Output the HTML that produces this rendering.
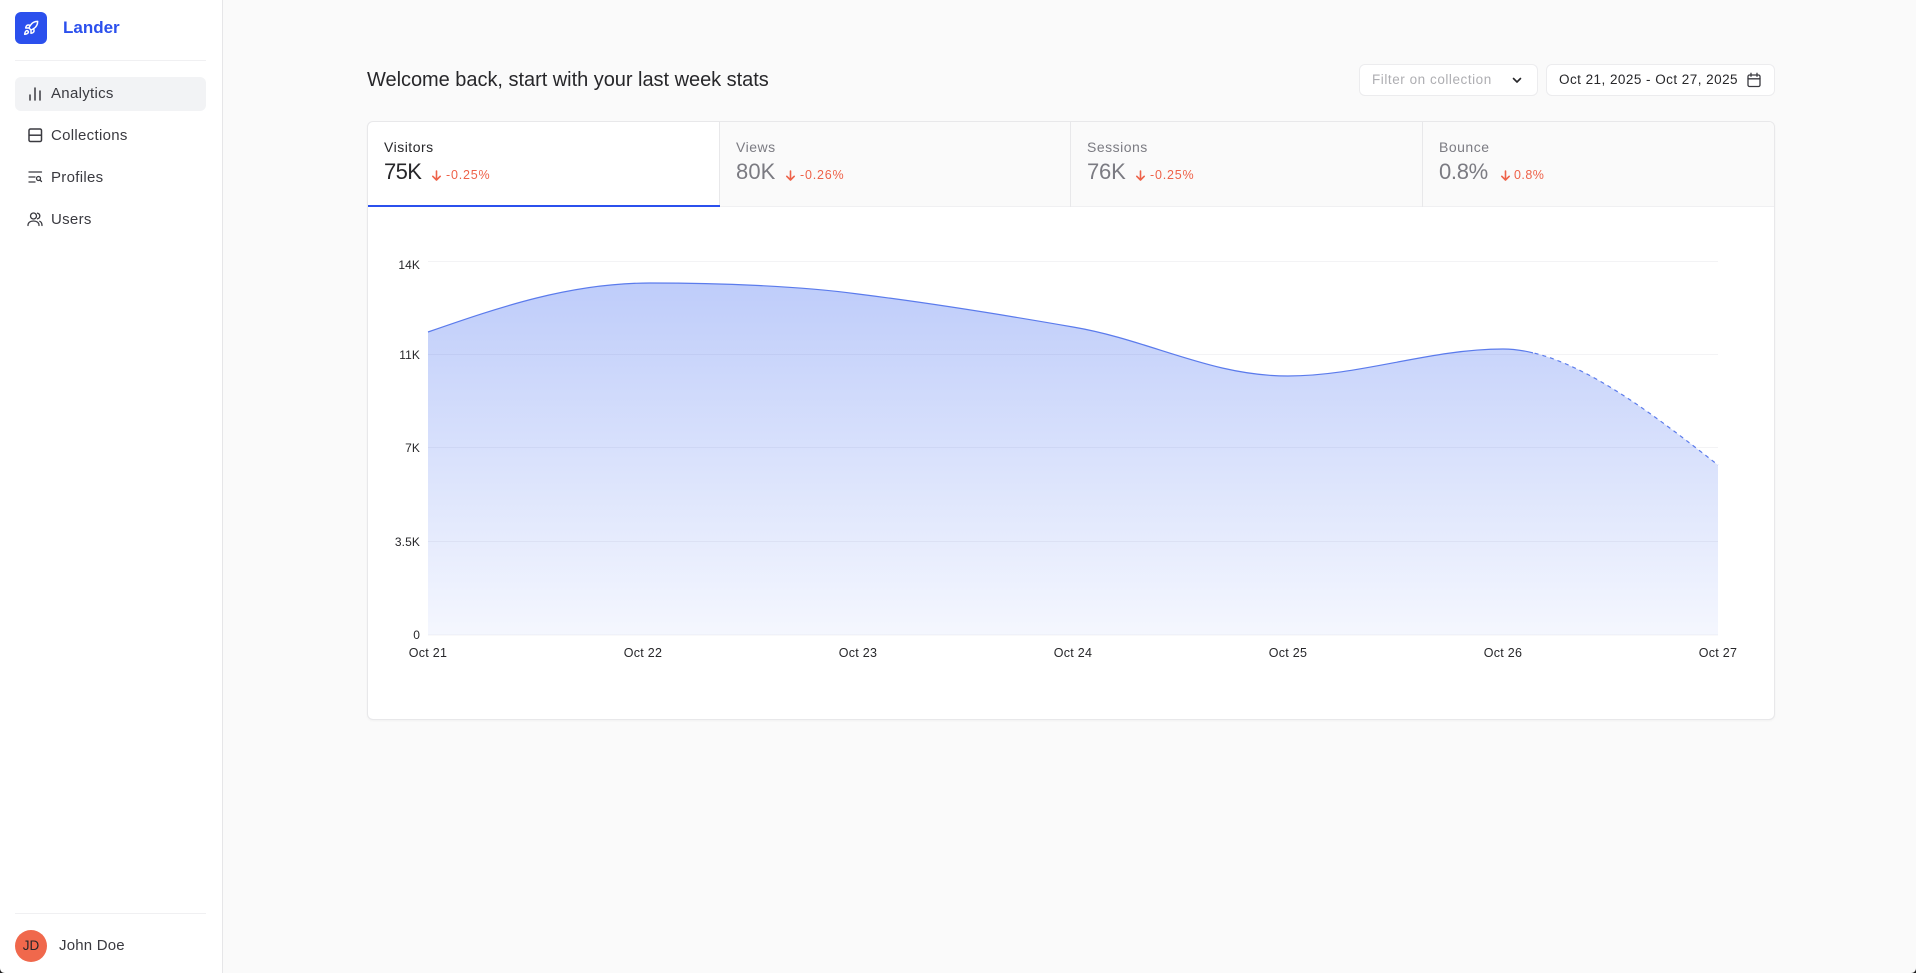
<!DOCTYPE html>
<html><head><meta charset="utf-8"><style>
*{box-sizing:border-box}
html,body{margin:0;padding:0;width:1916px;height:973px;overflow:hidden;background:#fafafa}
body{font-family:"Liberation Sans",sans-serif;color:#27272a;position:relative}
.t{position:absolute;white-space:nowrap;line-height:20px}
.a{position:absolute}
.lab{font-size:14px;color:#7b7b82;letter-spacing:.5px}
.val{font-size:22px;color:#7b7b82;line-height:28px;letter-spacing:-.6px}
.del{font-size:12.5px;color:#ee6249;letter-spacing:.8px}
.nav{font-size:15px;letter-spacing:.3px;color:#3a3a40}
.ax{font-size:12.5px;color:#27272a;letter-spacing:.3px}
.ay{font-size:12px;color:#27272a;letter-spacing:.1px}
</style></head><body>
<div class="a" style="left:0;top:0;width:223px;height:973px;background:#fff;border-right:1px solid #e6e6e8"></div>
<div class="a" style="left:15px;top:12px;width:32px;height:32px;border-radius:6px;background:#2b50ed"></div>
<svg class="a" style="left:23px;top:20px" width="16" height="16" viewBox="0 0 24 24" fill="none" stroke="#fff" stroke-width="2.2" stroke-linecap="round" stroke-linejoin="round"><path d="M4.5 16.5c-1.5 1.260-2 5-2 5s3.740-.5 5-2c.710-.840.700-2.130-.090-2.910a2.180 2.180 0 0 0-2.910-.090z"/><path d="M12 15l-3-3a22 22 0 0 1 2-3.950A12.880 12.880 0 0 1 22 2c0 2.720-.780 7.500-6 11a22.350 22.350 0 0 1-4 2z"/><path d="M9 12H4s.550-3.030 2-4c1.620-1.080 5 0 5 0"/><path d="M12 15v5s3.030-.550 4-2c1.080-1.620 0-5 0-5"/></svg>
<div class="t" style="left:63px;top:18px;font-size:17px;font-weight:bold;color:#2b50ed">Lander</div>
<div class="a" style="left:15px;top:60px;width:191px;height:1px;background:#f0f0f2"></div>
<div class="a" style="left:15px;top:77px;width:191px;height:34px;border-radius:6px;background:#f2f3f5"></div>
<svg class="a" style="left:26.500px;top:83.500px" width="16" height="18" viewBox="0 0 16 18" fill="none" stroke="#3a3a40" stroke-width="1.500" stroke-linecap="round"><path d="M3 16v-5M8 16V4M13 16V7"/></svg>
<div class="t nav" style="left:51px;top:84px">Analytics</div>
<svg class="a" style="left:26.500px;top:127px" width="16" height="16" viewBox="0 0 16 16" fill="none" stroke="#3a3a40" stroke-width="1.500"><rect x="2" y="2" width="12.500" height="12.500" rx="1.500"/><path d="M2 8.200h12.500"/></svg>
<div class="t nav" style="left:51px;top:126px">Collections</div>
<svg class="a" style="left:27px;top:169px" width="16" height="16" viewBox="0 0 16 16" fill="none" stroke="#3a3a40" stroke-width="1.300" stroke-linecap="round"><path d="M2 3h12.500M2 8h6M2 13h6"/><circle cx="11.500" cy="9.500" r="2"/><path d="M13 11l1.500 1.500"/></svg>
<div class="t nav" style="left:51px;top:168px">Profiles</div>
<svg class="a" style="left:27px;top:211px" width="16" height="16" viewBox="0 0 16 16" fill="none" stroke="#3a3a40" stroke-width="1.300" stroke-linecap="round"><circle cx="6.500" cy="5" r="3"/><path d="M1 14.500c0-3 2.200-4.500 5.500-4.500s5.500 1.500 5.500 4.500"/><path d="M10.500 2.200c1.500.300 2.300 1.400 2.300 2.800s-.800 2.400-2.300 2.800M12.800 10.300c1.400.600 2.200 2.100 2.200 4.200"/></svg>
<div class="t nav" style="left:51px;top:210px">Users</div>
<div class="a" style="left:15px;top:913px;width:191px;height:1px;background:#f0f0f2"></div>
<div class="a" style="left:15px;top:930px;width:32px;height:32px;border-radius:50%;background:#f0684c"></div>
<div class="t" style="left:15px;top:936px;width:32px;text-align:center;font-size:13.500px;color:#27272a">JD</div>
<div class="t nav" style="left:59px;top:936px;letter-spacing:.2px">John Doe</div>

<div class="t" style="left:367px;top:70px;font-size:20px;letter-spacing:-.03px;color:#27272a">Welcome back, start with your last week stats</div>

<div class="a" style="left:1359px;top:64px;width:179px;height:32px;border:1px solid #ececee;border-radius:6px;background:#fff"></div>
<div class="t" style="left:1372px;top:70px;font-size:13.500px;letter-spacing:.55px;color:#aeaeb2">Filter on collection</div>
<svg class="a" style="left:1511px;top:74px" width="12" height="12" viewBox="0 0 12 12" fill="none" stroke="#27272a" stroke-width="1.600" stroke-linecap="round" stroke-linejoin="round"><path d="M2.500 4.500L6 8l3.500-3.500"/></svg>
<div class="a" style="left:1546px;top:64px;width:229px;height:32px;border:1px solid #ececee;border-radius:6px;background:#fff"></div>
<div class="t" style="left:1559px;top:70px;font-size:13.500px;letter-spacing:.46px;color:#27272a">Oct 21, 2025 - Oct 27, 2025</div>
<svg class="a" style="left:1746px;top:72px" width="16" height="16" viewBox="0 0 16 16" fill="none" stroke="#3a3a40" stroke-width="1.300" stroke-linecap="round"><rect x="2" y="3" width="12" height="11.500" rx="1.500"/><path d="M2 6.800h12M5 1.300v3M11 1.300v3"/></svg>

<div class="a" style="left:367px;top:121px;width:1408px;height:599px;background:#fff;border:1px solid #e8e8ea;border-radius:6px;box-shadow:0 1px 2px rgba(0,0,0,.04);overflow:hidden">
 <div class="a" style="left:352px;top:0;width:1056px;height:85px;background:#fafafa;border-bottom:1px solid #f0f0f2"></div>
 <div class="a" style="left:351px;top:0;width:1px;height:85px;background:#e8e8ea"></div>
 <div class="a" style="left:702px;top:0;width:1px;height:85px;background:#e8e8ea"></div>
 <div class="a" style="left:1054px;top:0;width:1px;height:85px;background:#e8e8ea"></div>
 <div class="a" style="left:0;top:83px;width:352px;height:2px;background:#2b50ed"></div>
</div>

<div class="t lab" style="left:384px;top:137px;color:#27272a">Visitors</div>
<div class="t val" style="left:384px;top:158px;color:#27272a">75K</div>
<svg class="a" style="left:431px;top:168.500px" width="11" height="12" viewBox="0 0 11 12" fill="none" stroke="#ee6249" stroke-width="1.600" stroke-linecap="round" stroke-linejoin="round"><path d="M5.500 2v9M1.800 7.300l3.700 3.700 3.700-3.700"/></svg>
<div class="t del" style="left:446px;top:165px">-0.25%</div>

<div class="t lab" style="left:736px;top:137px">Views</div>
<div class="t val" style="left:736px;top:158px;letter-spacing:.1px">80K</div>
<svg class="a" style="left:784.500px;top:168.500px" width="11" height="12" viewBox="0 0 11 12" fill="none" stroke="#ee6249" stroke-width="1.600" stroke-linecap="round" stroke-linejoin="round"><path d="M5.500 2v9M1.800 7.300l3.700 3.700 3.700-3.700"/></svg>
<div class="t del" style="left:800px;top:165px">-0.26%</div>

<div class="t lab" style="left:1087px;top:137px">Sessions</div>
<div class="t val" style="left:1087px;top:158px;letter-spacing:-.2px">76K</div>
<svg class="a" style="left:1135px;top:168.500px" width="11" height="12" viewBox="0 0 11 12" fill="none" stroke="#ee6249" stroke-width="1.600" stroke-linecap="round" stroke-linejoin="round"><path d="M5.500 2v9M1.800 7.300l3.700 3.700 3.700-3.700"/></svg>
<div class="t del" style="left:1150px;top:165px">-0.25%</div>

<div class="t lab" style="left:1439px;top:137px">Bounce</div>
<div class="t val" style="left:1439px;top:158px;letter-spacing:-.3px">0.8%</div>
<svg class="a" style="left:1500px;top:168.500px" width="11" height="12" viewBox="0 0 11 12" fill="none" stroke="#ee6249" stroke-width="1.600" stroke-linecap="round" stroke-linejoin="round"><path d="M5.500 2v9M1.800 7.300l3.700 3.700 3.700-3.700"/></svg>
<div class="t del" style="left:1514px;top:165px;letter-spacing:.45px">0.8%</div>

<svg class="a" style="left:0;top:0" width="1916" height="973" viewBox="0 0 1916 973" fill="none">
 <defs>
  <linearGradient id="g" gradientUnits="userSpaceOnUse" x1="0" y1="283" x2="0" y2="635"><stop offset="0" stop-color="#2f5cee" stop-opacity=".31"/><stop offset="1" stop-color="#2f5cee" stop-opacity=".05"/></linearGradient>
  <clipPath id="c1"><rect x="420" y="250" width="1113" height="400"/></clipPath>
  <clipPath id="c2"><rect x="1533" y="250" width="190" height="400"/></clipPath>
 </defs>
 <path d="M428 261.500H1718M428 354.500H1718M428 447.500H1718M428 541.500H1718" stroke="#f3f3f5" stroke-width="1"/>
 <path d="M428 635H1718" stroke="#f3f3f5"/>
 <path fill="url(#g)" d="M428 332C500 307 570 283 650 283C720 283 800 286 858 294C930 303 1010 316 1073 327C1150 340 1210 376 1288 376C1360 376 1430 349 1503 349C1570 349 1650 412 1718 465V635H428Z"/>
 <path clip-path="url(#c1)" stroke="#5b7bec" stroke-width="1.200" d="M428 332C500 307 570 283 650 283C720 283 800 286 858 294C930 303 1010 316 1073 327C1150 340 1210 376 1288 376C1360 376 1430 349 1503 349C1570 349 1650 412 1718 465"/>
 <path clip-path="url(#c2)" stroke="#5b7bec" stroke-width="1.200" stroke-dasharray="4 4" d="M1503 349C1570 349 1650 412 1718 465"/>
</svg>

<div class="t ay" style="right:1496px;top:255px">14K</div>
<div class="t ay" style="right:1496px;top:345px">11K</div>
<div class="t ay" style="right:1496px;top:438px">7K</div>
<div class="t ay" style="right:1496px;top:532px">3.5K</div>
<div class="t ay" style="right:1496px;top:625px">0</div>
<div class="t ax" style="left:388px;width:80px;text-align:center;top:643px">Oct 21</div>
<div class="t ax" style="left:603px;width:80px;text-align:center;top:643px">Oct 22</div>
<div class="t ax" style="left:818px;width:80px;text-align:center;top:643px">Oct 23</div>
<div class="t ax" style="left:1033px;width:80px;text-align:center;top:643px">Oct 24</div>
<div class="t ax" style="left:1248px;width:80px;text-align:center;top:643px">Oct 25</div>
<div class="t ax" style="left:1463px;width:80px;text-align:center;top:643px">Oct 26</div>
<div class="t ax" style="left:1678px;width:80px;text-align:center;top:643px">Oct 27</div>

<svg class="a" style="left:0;top:968px" width="5" height="5"><path d="M0 0C0 3 2 5 5 5H0Z" fill="#222"/></svg>
<svg class="a" style="left:1911px;top:968px" width="5" height="5"><path d="M5 0C5 3 3 5 0 5H5Z" fill="#222"/></svg>
</body></html>
